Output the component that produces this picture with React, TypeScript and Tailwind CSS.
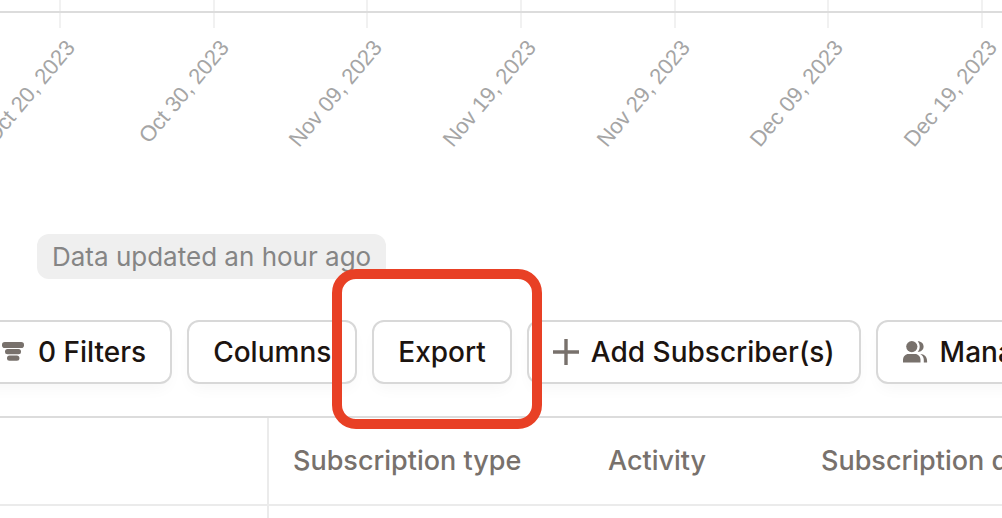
import type { ReactNode } from "react";

const ticks = [
  { x: 60, label: "Oct 20, 2023" },
  { x: 214, label: "Oct 30, 2023" },
  { x: 367, label: "Nov 09, 2023" },
  { x: 521, label: "Nov 19, 2023" },
  { x: 675, label: "Nov 29, 2023" },
  { x: 828, label: "Dec 09, 2023" },
  { x: 982, label: "Dec 19, 2023" },
];

const FilterIcon = () => (
  <svg className="size-[26px] shrink-0" viewBox="0 0 26 26" fill="#78716c" aria-hidden="true">
    <rect x="2" y="3" width="22" height="6" rx="2.8" />
    <rect x="5" y="10" width="16" height="5.2" rx="2.5" />
    <rect x="7" y="16.4" width="12.4" height="5.4" rx="2.5" />
  </svg>
);

const PlusIcon = () => (
  <svg className="size-[26px] shrink-0" viewBox="0 0 26 26" fill="none" stroke="#78716c" strokeWidth="3.4" aria-hidden="true">
    <path d="M13 0v26M0 13h26" />
  </svg>
);

const UsersIcon = () => (
  <svg className="size-[26px] shrink-0" viewBox="0 0 26 26" fill="#78716c" aria-hidden="true">
    <circle cx="9.8" cy="7.6" r="5.6" />
    <path d="M1 23.600v-2.600C1 17.500 3.500 15 6.500 15h6.500c3 0 5.500 2.500 5.500 6v2.600z" />
    <path d="M15.700 2.200c3.600 0 5.900 2.300 5.900 5.400s-2.300 5.400-5.900 5.400c1.300-1.500 2-3.300 2-5.400s-.7-3.900-2-5.400z" />
    <path d="M18.300 15c4.200.2 6.800 3 6.800 7v1.600h-3.300v-2.600c0-2.600-1.200-4.600-3.500-6z" />
  </svg>
);

const ToolbarButton = ({ icon, children }: { icon?: ReactNode; children: ReactNode }) => (
  <button
    type="button"
    className="flex h-16 shrink-0 items-center gap-3 whitespace-nowrap rounded-xl border-2 border-[#d8d8d8] bg-white px-6 text-[28px] font-medium text-[#1c1410] shadow-[0_8px_16px_-4px_rgba(0,0,0,0.04)]"
  >
    {icon}
    {children}
  </button>
);

const ChartAxis = () => (
  <svg className="block h-[234px] w-full" role="img" aria-label="Date axis">
    {ticks.map((tick) => (
      <g key={tick.label}>
        <rect x={tick.x - 1} y="0" width="2" height="28" fill="#f1f1f1" />
        <text
          textAnchor="end"
          transform={`translate(${tick.x + 16} 48) rotate(-50)`}
          className="fill-[#a5a5a5] font-['Liberation_Sans',sans-serif] text-[22px]"
        >
          {tick.label}
        </text>
      </g>
    ))}
    <rect x="0" y="11" width="100%" height="2" fill="#dcdcdc" />
  </svg>
);

const headCell = "px-6 text-left font-medium whitespace-nowrap";

const App = () => {
  return (
    <main className="min-h-screen overflow-hidden bg-white font-['Inter',sans-serif]">
      <ChartAxis />

      <div className="flex px-[37px]">
        <p className="rounded-xl bg-[#efefef] px-[15px] text-[26px] leading-[45px] text-[#858585]">
          Data updated an hour ago
        </p>
      </div>

      {/* The toolbar and the table are scrolled a little to the right */}
      <div className="-ml-[26px] mt-[41px] flex gap-[15px]">
        <ToolbarButton icon={<FilterIcon />}>0 Filters</ToolbarButton>
        <ToolbarButton>Columns</ToolbarButton>
        <div className="relative shrink-0">
          <ToolbarButton>Export</ToolbarButton>
          <div className="pointer-events-none absolute -bottom-[45px] -left-10 -right-[30px] -top-[51px] z-10 rounded-3xl border-10 border-[#e84025]" />
        </div>
        <ToolbarButton icon={<PlusIcon />}>Add Subscriber(s)</ToolbarButton>
        <ToolbarButton icon={<UsersIcon />}>Manage</ToolbarButton>
      </div>

      <table className="mt-8 w-full min-w-[1120px] table-fixed border-separate border-spacing-0 border-t-2 border-[#dcdcdc] text-[27px] text-[#78716c]">
        <thead>
          <tr className="h-22">
            <th className="w-[269px] border-b-2 border-r-2 border-[#ebebeb]" aria-label="Subscriber" />
            <th className={`${headCell} w-[315px] border-b-2 border-[#ebebeb]`}>Subscription type</th>
            <th className={`${headCell} w-[213px] border-b-2 border-[#ebebeb]`}>Activity</th>
            <th className={`${headCell} border-b-2 border-[#ebebeb]`}>Subscription date</th>
          </tr>
        </thead>
        <tbody>
          <tr className="h-3">
            <td className="border-r-2 border-[#ebebeb]" />
            <td colSpan={3} />
          </tr>
        </tbody>
      </table>
    </main>
  );
};

export default App;
